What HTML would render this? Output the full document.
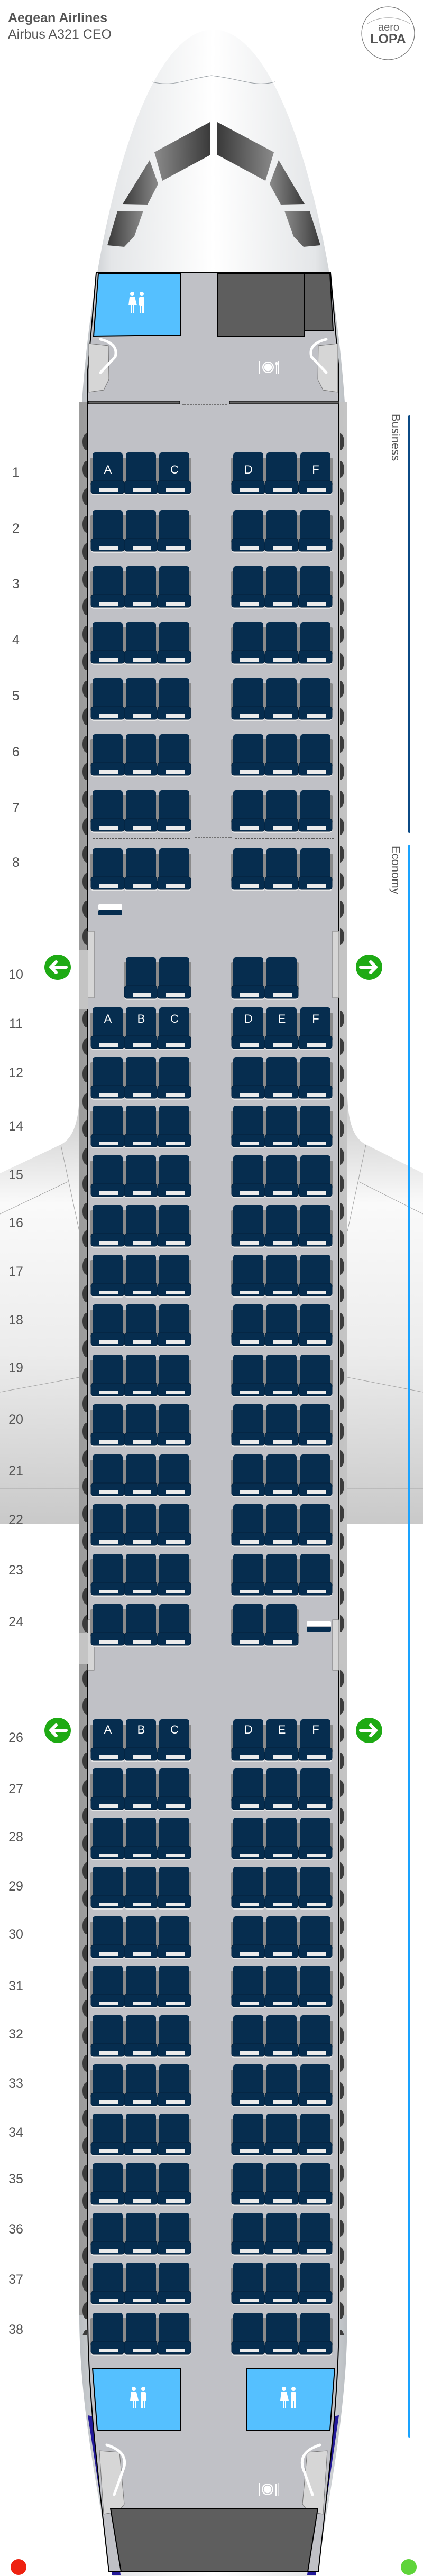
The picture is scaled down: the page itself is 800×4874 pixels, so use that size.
<!DOCTYPE html>
<html><head><meta charset="utf-8"><style>
html,body{margin:0;padding:0;background:#fff;}
svg{display:block;}
text{font-family:"Liberation Sans",sans-serif;}
</style></head><body>
<svg width="800" height="4874" viewBox="0 0 800 4874" xmlns="http://www.w3.org/2000/svg">
<defs>
<linearGradient id="nose" x1="0" x2="1" y1="0" y2="0">
<stop offset="0" stop-color="#b9bdc1"/><stop offset="0.12" stop-color="#e4e6e8"/><stop offset="0.5" stop-color="#ffffff"/><stop offset="0.88" stop-color="#e4e6e8"/><stop offset="1" stop-color="#b9bdc1"/>
</linearGradient>
<linearGradient id="win" x1="0" x2="1"><stop offset="0" stop-color="#3a3a3a"/><stop offset="1" stop-color="#8a8a8a"/></linearGradient>
<linearGradient id="winR" x1="1" x2="0"><stop offset="0" stop-color="#3a3a3a"/><stop offset="1" stop-color="#8a8a8a"/></linearGradient>
<linearGradient id="wingL" x1="0" x2="0" y1="0" y2="1">
<stop offset="0" stop-color="#c8c8c8"/><stop offset="0.25" stop-color="#fafafa"/><stop offset="0.6" stop-color="#ececec"/><stop offset="1" stop-color="#c9c9c9"/>
</linearGradient>
<linearGradient id="wall" x1="0" x2="1"><stop offset="0" stop-color="#9c9c9c"/><stop offset="1" stop-color="#c4c4c4"/></linearGradient>
<pattern id="bumpsL" x="0" y="0" width="16" height="52" patternUnits="userSpaceOnUse" patternTransform="translate(148 818)">
<ellipse cx="16" cy="18" rx="8" ry="16" fill="#3c3c3c"/>
</pattern>
<pattern id="bumpsR" x="0" y="0" width="16" height="52" patternUnits="userSpaceOnUse" patternTransform="translate(643 818)">
<ellipse cx="0" cy="18" rx="8" ry="16" fill="#3c3c3c"/>
</pattern>
<g id="s">
<rect x="-4" y="10" width="6" height="52" rx="2" fill="#8a8a8a"/>
<rect x="55" y="10" width="6" height="52" rx="2" fill="#8a8a8a"/>
<rect x="0" y="0" width="57" height="62" rx="5" fill="#062d4f"/>
<rect x="-3" y="57" width="63" height="24" rx="5" fill="#e6e6e6"/>
<rect x="-3" y="54" width="63" height="24" rx="5" fill="#062d4f" stroke="#041f38" stroke-width="1"/>
<rect x="13" y="68" width="35" height="7" fill="#ececec"/>
</g>
<g id="wc">
<circle cx="-9" cy="-22" r="4" fill="#fff"/><path d="M-14,-16 h10 l4,16 h-5 v14 h-2 v-14 h-2 v14 h-2 v-14 h-5z" fill="#fff"/>
<circle cx="9" cy="-22" r="4" fill="#fff"/><rect x="4" y="-16" width="10" height="17" rx="2" fill="#fff"/><rect x="5" y="0" width="3" height="15" fill="#fff"/><rect x="10" y="0" width="3" height="15" fill="#fff"/>
</g>
<g id="gal">
<circle cx="0" cy="0" r="11" fill="#fff"/><circle cx="0" cy="0" r="8" fill="none" stroke="#c0c1c6" stroke-width="1.5"/>
<rect x="-17" y="-12" width="2" height="24" fill="#fff"/><rect x="15" y="-4" width="2" height="16" fill="#fff"/><ellipse cx="16" cy="-7" rx="2" ry="4" fill="#fff"/><rect x="19" y="-12" width="1.5" height="24" fill="#fff"/>
</g>
<g id="arL"><ellipse cx="0" cy="0" rx="25" ry="24" fill="#1eaa14"/><path d="M16,0 H-12 M-3,-10 L-13,0 L-3,10" fill="none" stroke="#fff" stroke-width="6" stroke-linecap="round" stroke-linejoin="round"/></g>
<g id="arR"><ellipse cx="0" cy="0" rx="25" ry="24" fill="#1eaa14"/><path d="M-16,0 H12 M3,-10 L13,0 L3,10" fill="none" stroke="#fff" stroke-width="6" stroke-linecap="round" stroke-linejoin="round"/></g>
</defs>

<!-- wings -->
<path d="M150,2075 C148,2140 130,2160 110,2168 L0,2220 L0,2884 L150,2884Z" fill="url(#wingL)"/>
<path d="M657,2075 C659,2140 677,2160 697,2168 L800,2220 L800,2884 L657,2884Z" fill="url(#wingL)"/>
<g stroke="#999" stroke-width="0.8" fill="none">
<path d="M115,2166 L150,2330"/><path d="M0,2297 L128,2236"/><path d="M0,2634 L150,2606"/><path d="M0,2816 H150"/>
<path d="M692,2166 L657,2330"/><path d="M800,2297 L679,2236"/><path d="M800,2634 L657,2606"/><path d="M800,2816 H657"/>
</g>

<!-- fuselage -->
<path d="M150,900 C150,560 250,56 403,56 C556,56 657,560 657,900 L657,4380 C657,4560 620,4740 597,4874 L213,4874 C190,4740 150,4560 150,4380Z" fill="url(#nose)"/>
<rect x="150" y="760" width="507" height="3620" fill="url(#wall)"/>
<rect x="150" y="818" width="16" height="3600" fill="url(#bumpsL)"/>
<rect x="641" y="818" width="16" height="3600" fill="url(#bumpsR)"/>
<path d="M166,4570 L188,4574 L228,4872 L212,4872Z" fill="#23199a"/>
<path d="M641,4570 L619,4574 L581,4872 L597,4872Z" fill="#23199a"/>
<path d="M182,516 L625,516 L641,700 L641,4380 C641,4540 620,4700 602,4866 L206,4866 C188,4700 166,4540 166,4380 L166,700Z" fill="#c0c1c6" stroke="#000" stroke-width="2"/>
<path d="M287,155 C330,165 350,150 400,143 C460,150 480,165 520,155" fill="none" stroke="#9aa0a5" stroke-width="1"/>
<path d="M397,231 L398,293 L307,342 L292,288Z" fill="url(#winR)"/>
<path d="M411,231 L518,288 L502,342 L411,293Z" fill="url(#win)"/>
<path d="M283,303 L299,348 L279,387 L232,386Z" fill="url(#win)"/>
<path d="M527,303 L576,386 L531,387 L510,348Z" fill="url(#winR)"/>
<path d="M271,399 L254,447 L235,467 L203,464 L222,400Z" fill="url(#win)"/>
<path d="M538,399 L586,400 L606,464 L574,467 L555,447Z" fill="url(#winR)"/>

<!-- front monuments -->
<path d="M186,518 L341,518 L341,634 L177,636Z" fill="#55c0ff" stroke="#000" stroke-width="2"/>
<use href="#wc" x="259" y="578"/>
<rect x="412" y="517" width="163" height="119" fill="#5e5e5e" stroke="#000" stroke-width="2"/>
<path d="M575,517 L624,517 L630,625 L575,625Z" fill="#5e5e5e" stroke="#000" stroke-width="2"/>
<use href="#gal" x="507" y="695"/>
<path d="M168,650 L205,654 L206,718 L196,738 L168,742Z" fill="#d6d6d6" stroke="#777" stroke-width="1"/>
<path d="M190,642 C215,648 222,660 218,675 L190,705" fill="none" stroke="#fff" stroke-width="5" stroke-linecap="round"/>
<path d="M639,650 L602,654 L601,718 L611,738 L639,742Z" fill="#d6d6d6" stroke="#777" stroke-width="1"/>
<path d="M617,642 C592,648 585,660 589,675 L617,705" fill="none" stroke="#fff" stroke-width="5" stroke-linecap="round"/>
<rect x="167" y="759" width="173" height="5" fill="#666" stroke="#000" stroke-width="1"/>
<rect x="434" y="759" width="207" height="5" fill="#666" stroke="#000" stroke-width="1"/>
<line x1="344" y1="765" x2="432" y2="765" stroke="#555" stroke-width="1.5" stroke-dasharray="2 1"/>
<line x1="175" y1="1586" x2="360" y2="1586" stroke="#555" stroke-width="2" stroke-dasharray="2 1"/>
<line x1="368" y1="1585" x2="440" y2="1585" stroke="#555" stroke-width="1.5" stroke-dasharray="2 1"/>
<line x1="444" y1="1586" x2="631" y2="1586" stroke="#555" stroke-width="2" stroke-dasharray="2 1"/>

<g fill="#d6d6d6" stroke="#777" stroke-width="1">
<rect x="166" y="1762" width="12" height="126"/><rect x="629" y="1762" width="12" height="126"/>
<rect x="166" y="3065" width="12" height="95"/><rect x="629" y="3065" width="12" height="95"/>
</g>
<rect x="150" y="1798" width="16" height="112" fill="#c4c4c4"/><rect x="641" y="1798" width="16" height="112" fill="#c4c4c4"/>
<rect x="150" y="3089" width="16" height="60" fill="#c4c4c4"/><rect x="641" y="3089" width="16" height="60" fill="#c4c4c4"/>
<use href="#arL" x="109" y="1830"/><use href="#arR" x="698" y="1830"/>
<use href="#arL" x="109" y="3274"/><use href="#arR" x="698" y="3274"/>
<rect x="186" y="1711" width="45" height="10" rx="2" fill="#fff"/><rect x="186" y="1722" width="45" height="10" rx="2" fill="#062d4f"/>
<rect x="580" y="3068" width="46" height="9" rx="2" fill="#fff"/><rect x="580" y="3078" width="46" height="9" rx="2" fill="#062d4f"/>

<g>
<use href="#s" x="175" y="856"/><use href="#s" x="238" y="856"/><use href="#s" x="301" y="856"/><use href="#s" x="441" y="856"/><use href="#s" x="504" y="856"/><use href="#s" x="568" y="856"/>
<use href="#s" x="175" y="965"/><use href="#s" x="238" y="965"/><use href="#s" x="301" y="965"/><use href="#s" x="441" y="965"/><use href="#s" x="504" y="965"/><use href="#s" x="568" y="965"/>
<use href="#s" x="175" y="1071"/><use href="#s" x="238" y="1071"/><use href="#s" x="301" y="1071"/><use href="#s" x="441" y="1071"/><use href="#s" x="504" y="1071"/><use href="#s" x="568" y="1071"/>
<use href="#s" x="175" y="1177"/><use href="#s" x="238" y="1177"/><use href="#s" x="301" y="1177"/><use href="#s" x="441" y="1177"/><use href="#s" x="504" y="1177"/><use href="#s" x="568" y="1177"/>
<use href="#s" x="175" y="1283"/><use href="#s" x="238" y="1283"/><use href="#s" x="301" y="1283"/><use href="#s" x="441" y="1283"/><use href="#s" x="504" y="1283"/><use href="#s" x="568" y="1283"/>
<use href="#s" x="175" y="1389"/><use href="#s" x="238" y="1389"/><use href="#s" x="301" y="1389"/><use href="#s" x="441" y="1389"/><use href="#s" x="504" y="1389"/><use href="#s" x="568" y="1389"/>
<use href="#s" x="175" y="1495"/><use href="#s" x="238" y="1495"/><use href="#s" x="301" y="1495"/><use href="#s" x="441" y="1495"/><use href="#s" x="504" y="1495"/><use href="#s" x="568" y="1495"/>
<use href="#s" x="175" y="1605"/><use href="#s" x="238" y="1605"/><use href="#s" x="301" y="1605"/><use href="#s" x="441" y="1605"/><use href="#s" x="504" y="1605"/><use href="#s" x="568" y="1605"/>
<use href="#s" x="238" y="1811"/><use href="#s" x="301" y="1811"/><use href="#s" x="441" y="1811"/><use href="#s" x="504" y="1811"/>
<use href="#s" x="175" y="1906"/><use href="#s" x="238" y="1906"/><use href="#s" x="301" y="1906"/><use href="#s" x="441" y="1906"/><use href="#s" x="504" y="1906"/><use href="#s" x="568" y="1906"/>
<use href="#s" x="175" y="2000"/><use href="#s" x="238" y="2000"/><use href="#s" x="301" y="2000"/><use href="#s" x="441" y="2000"/><use href="#s" x="504" y="2000"/><use href="#s" x="568" y="2000"/>
<use href="#s" x="175" y="2092"/><use href="#s" x="238" y="2092"/><use href="#s" x="301" y="2092"/><use href="#s" x="441" y="2092"/><use href="#s" x="504" y="2092"/><use href="#s" x="568" y="2092"/>
<use href="#s" x="175" y="2186"/><use href="#s" x="238" y="2186"/><use href="#s" x="301" y="2186"/><use href="#s" x="441" y="2186"/><use href="#s" x="504" y="2186"/><use href="#s" x="568" y="2186"/>
<use href="#s" x="175" y="2280"/><use href="#s" x="238" y="2280"/><use href="#s" x="301" y="2280"/><use href="#s" x="441" y="2280"/><use href="#s" x="504" y="2280"/><use href="#s" x="568" y="2280"/>
<use href="#s" x="175" y="2374"/><use href="#s" x="238" y="2374"/><use href="#s" x="301" y="2374"/><use href="#s" x="441" y="2374"/><use href="#s" x="504" y="2374"/><use href="#s" x="568" y="2374"/>
<use href="#s" x="175" y="2468"/><use href="#s" x="238" y="2468"/><use href="#s" x="301" y="2468"/><use href="#s" x="441" y="2468"/><use href="#s" x="504" y="2468"/><use href="#s" x="568" y="2468"/>
<use href="#s" x="175" y="2563"/><use href="#s" x="238" y="2563"/><use href="#s" x="301" y="2563"/><use href="#s" x="441" y="2563"/><use href="#s" x="504" y="2563"/><use href="#s" x="568" y="2563"/>
<use href="#s" x="175" y="2657"/><use href="#s" x="238" y="2657"/><use href="#s" x="301" y="2657"/><use href="#s" x="441" y="2657"/><use href="#s" x="504" y="2657"/><use href="#s" x="568" y="2657"/>
<use href="#s" x="175" y="2752"/><use href="#s" x="238" y="2752"/><use href="#s" x="301" y="2752"/><use href="#s" x="441" y="2752"/><use href="#s" x="504" y="2752"/><use href="#s" x="568" y="2752"/>
<use href="#s" x="175" y="2846"/><use href="#s" x="238" y="2846"/><use href="#s" x="301" y="2846"/><use href="#s" x="441" y="2846"/><use href="#s" x="504" y="2846"/><use href="#s" x="568" y="2846"/>
<use href="#s" x="175" y="2940"/><use href="#s" x="238" y="2940"/><use href="#s" x="301" y="2940"/><use href="#s" x="441" y="2940"/><use href="#s" x="504" y="2940"/><use href="#s" x="568" y="2940"/>
<use href="#s" x="175" y="3035"/><use href="#s" x="238" y="3035"/><use href="#s" x="301" y="3035"/><use href="#s" x="441" y="3035"/><use href="#s" x="504" y="3035"/>
<use href="#s" x="175" y="3253"/><use href="#s" x="238" y="3253"/><use href="#s" x="301" y="3253"/><use href="#s" x="441" y="3253"/><use href="#s" x="504" y="3253"/><use href="#s" x="568" y="3253"/>
<use href="#s" x="175" y="3346"/><use href="#s" x="238" y="3346"/><use href="#s" x="301" y="3346"/><use href="#s" x="441" y="3346"/><use href="#s" x="504" y="3346"/><use href="#s" x="568" y="3346"/>
<use href="#s" x="175" y="3439"/><use href="#s" x="238" y="3439"/><use href="#s" x="301" y="3439"/><use href="#s" x="441" y="3439"/><use href="#s" x="504" y="3439"/><use href="#s" x="568" y="3439"/>
<use href="#s" x="175" y="3532"/><use href="#s" x="238" y="3532"/><use href="#s" x="301" y="3532"/><use href="#s" x="441" y="3532"/><use href="#s" x="504" y="3532"/><use href="#s" x="568" y="3532"/>
<use href="#s" x="175" y="3626"/><use href="#s" x="238" y="3626"/><use href="#s" x="301" y="3626"/><use href="#s" x="441" y="3626"/><use href="#s" x="504" y="3626"/><use href="#s" x="568" y="3626"/>
<use href="#s" x="175" y="3719"/><use href="#s" x="238" y="3719"/><use href="#s" x="301" y="3719"/><use href="#s" x="441" y="3719"/><use href="#s" x="504" y="3719"/><use href="#s" x="568" y="3719"/>
<use href="#s" x="175" y="3813"/><use href="#s" x="238" y="3813"/><use href="#s" x="301" y="3813"/><use href="#s" x="441" y="3813"/><use href="#s" x="504" y="3813"/><use href="#s" x="568" y="3813"/>
<use href="#s" x="175" y="3906"/><use href="#s" x="238" y="3906"/><use href="#s" x="301" y="3906"/><use href="#s" x="441" y="3906"/><use href="#s" x="504" y="3906"/><use href="#s" x="568" y="3906"/>
<use href="#s" x="175" y="3999"/><use href="#s" x="238" y="3999"/><use href="#s" x="301" y="3999"/><use href="#s" x="441" y="3999"/><use href="#s" x="504" y="3999"/><use href="#s" x="568" y="3999"/>
<use href="#s" x="175" y="4093"/><use href="#s" x="238" y="4093"/><use href="#s" x="301" y="4093"/><use href="#s" x="441" y="4093"/><use href="#s" x="504" y="4093"/><use href="#s" x="568" y="4093"/>
<use href="#s" x="175" y="4187"/><use href="#s" x="238" y="4187"/><use href="#s" x="301" y="4187"/><use href="#s" x="441" y="4187"/><use href="#s" x="504" y="4187"/><use href="#s" x="568" y="4187"/>
<use href="#s" x="175" y="4281"/><use href="#s" x="238" y="4281"/><use href="#s" x="301" y="4281"/><use href="#s" x="441" y="4281"/><use href="#s" x="504" y="4281"/><use href="#s" x="568" y="4281"/>
<use href="#s" x="175" y="4376"/><use href="#s" x="238" y="4376"/><use href="#s" x="301" y="4376"/><use href="#s" x="441" y="4376"/><use href="#s" x="504" y="4376"/><use href="#s" x="568" y="4376"/>
</g>
<g fill="#fff" font-size="22" text-anchor="middle">
<text x="204" y="896">A</text><text x="330" y="896">C</text><text x="470" y="896">D</text><text x="597" y="896">F</text>
<text x="204" y="1935">A</text><text x="267" y="1935">B</text><text x="330" y="1935">C</text><text x="470" y="1935">D</text><text x="533" y="1935">E</text><text x="597" y="1935">F</text>
<text x="204" y="3280">A</text><text x="267" y="3280">B</text><text x="330" y="3280">C</text><text x="470" y="3280">D</text><text x="533" y="3280">E</text><text x="597" y="3280">F</text>
</g>

<path d="M175,4481 L341,4481 L341,4598 L184,4598Z" fill="#55c0ff" stroke="#000" stroke-width="2"/>
<path d="M467,4481 L633,4481 L624,4598 L467,4598Z" fill="#55c0ff" stroke="#000" stroke-width="2"/>
<use href="#wc" x="262" y="4542"/><use href="#wc" x="546" y="4542"/>
<path d="M188,4637 L226,4640 L235,4738 L224,4752 L196,4757Z" fill="#d6d6d6" stroke="#777" stroke-width="1"/>
<path d="M202,4626 C230,4635 240,4650 234,4670 L216,4720" fill="none" stroke="#fff" stroke-width="5" stroke-linecap="round"/>
<path d="M619,4637 L581,4640 L572,4738 L583,4752 L611,4757Z" fill="#d6d6d6" stroke="#777" stroke-width="1"/>
<path d="M605,4626 C577,4635 567,4650 573,4670 L591,4720" fill="none" stroke="#fff" stroke-width="5" stroke-linecap="round"/>
<use href="#gal" x="506" y="4710"/>
<path d="M209,4746 L601,4746 L582,4866 L229,4866Z" fill="#5e5e5e" stroke="#000" stroke-width="2"/>

<g fill="#555" font-size="25" text-anchor="middle">
<text x="30" y="902">1</text><text x="30" y="1008">2</text><text x="30" y="1113">3</text><text x="30" y="1219">4</text><text x="30" y="1325">5</text><text x="30" y="1431">6</text><text x="30" y="1537">7</text><text x="30" y="1640">8</text>
<text x="30" y="1852">10</text><text x="30" y="1945">11</text><text x="30" y="2038">12</text><text x="30" y="2139">14</text><text x="30" y="2231">15</text><text x="30" y="2322">16</text><text x="30" y="2414">17</text><text x="30" y="2506">18</text><text x="30" y="2596">19</text><text x="30" y="2694">20</text><text x="30" y="2791">21</text><text x="30" y="2884">22</text><text x="30" y="2979">23</text><text x="30" y="3077">24</text>
<text x="30" y="3296">26</text><text x="30" y="3393">27</text><text x="30" y="3484">28</text><text x="30" y="3577">29</text><text x="30" y="3668">30</text><text x="30" y="3766">31</text><text x="30" y="3857">32</text><text x="30" y="3950">33</text><text x="30" y="4043">34</text><text x="30" y="4131">35</text><text x="30" y="4226">36</text><text x="30" y="4321">37</text><text x="30" y="4416">38</text>
</g>

<rect x="772" y="786" width="4" height="790" rx="2" fill="#0b4a85"/>
<rect x="772" y="1598" width="4" height="3014" rx="2" fill="#1aa3ff"/>
<text transform="translate(741,783) rotate(90)" font-size="22" fill="#555">Business</text>
<text transform="translate(741,1600) rotate(90)" font-size="22" fill="#555">Economy</text>

<text x="15" y="42" font-size="25" font-weight="bold" fill="#555">Aegean Airlines</text>
<text x="15" y="73" font-size="25" fill="#555">Airbus A321 CEO</text>
<circle cx="734" cy="63" r="50" fill="#fff" stroke="#777" stroke-width="1.2"/>
<path d="M695,45 C715,30 755,30 775,45" fill="none" stroke="#aaa" stroke-width="1"/>
<text x="735" y="58" font-size="20" fill="#666" text-anchor="middle">aero</text>
<text x="734" y="82" font-size="25" fill="#555" font-weight="bold" text-anchor="middle">LOPA</text>

<circle cx="35" cy="4857" r="15" fill="#ee2211"/>
<circle cx="773" cy="4857" r="15" fill="#5fd43a"/>
</svg>
</body></html>
